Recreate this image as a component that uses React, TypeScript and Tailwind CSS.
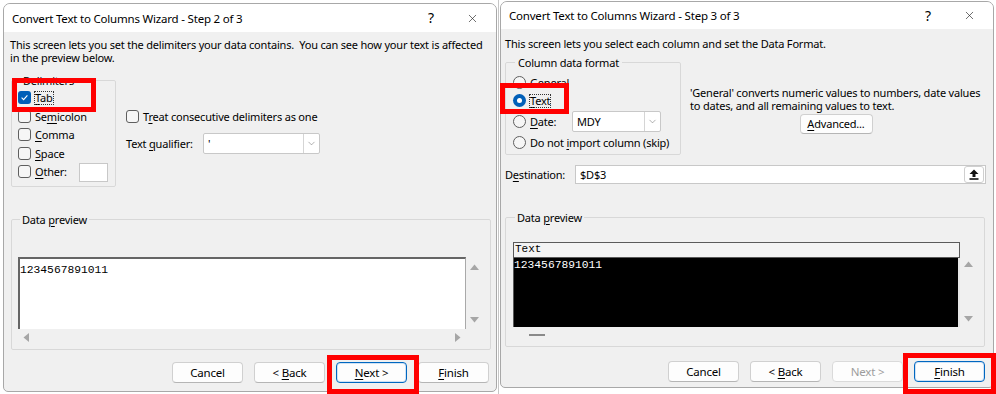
import { ChevronDown, X } from "lucide-react";

type Kids = { children?: React.ReactNode };

function U({ children }: Kids) {
  return <span className="underline underline-offset-[2px] decoration-[1px]">{children}</span>;
}

function Checkbox({ checked = false }: { checked?: boolean }) {
  if (checked) {
    return (
      <span className="w-[13px] h-[13px] rounded-[3px] bg-[#005fb8] flex items-center justify-center shrink-0">
        <svg width="9" height="9" viewBox="0 0 9 9">
          <path d="M1.6 4.7 L3.6 6.6 L7.4 2.4" fill="none" stroke="white" strokeWidth="1.1" />
        </svg>
      </span>
    );
  }
  return <span className="w-[13px] h-[13px] rounded-[3px] border border-[#5f5f5f] bg-[#f6f6f6] shrink-0" />;
}

function Radio({ checked = false }: { checked?: boolean }) {
  if (checked) {
    return (
      <span className="w-[13px] h-[13px] rounded-full bg-[#005fb8] flex items-center justify-center shrink-0">
        <span className="w-[5px] h-[5px] rounded-full bg-white" />
      </span>
    );
  }
  return <span className="w-[13px] h-[13px] rounded-full border border-[#5f5f5f] bg-[#f6f6f6] shrink-0" />;
}

function Btn({ children, primary, disabled }: Kids & { primary?: boolean; disabled?: boolean }) {
  return (
    <div
      className={`w-[71px] h-[21px] rounded-[4px] bg-[#fdfdfd] flex items-center justify-center text-[11.5px] ${
        primary
          ? "border border-[#0067c0] shadow-[inset_0_0_0_1px_#cfe2f5]"
          : disabled
          ? "border border-[#dadada] text-[#9c9c9c]"
          : "border border-[#d0d0d0] border-b-[#b5b5b5]"
      }`}
    >
      <span className="whitespace-pre">{children}</span>
    </div>
  );
}

function Arrow({ dir }: { dir: "up" | "down" | "left" | "right" }) {
  const d = {
    up: "M0 6 L4.5 0.5 L9 6 Z",
    down: "M0 0 L4.5 5.5 L9 0 Z",
    left: "M6 0 L0.5 4.5 L6 9 Z",
    right: "M0 0 L5.5 4.5 L0 9 Z",
  }[dir];
  const vertical = dir === "up" || dir === "down";
  return (
    <svg width={vertical ? 9 : 6} height={vertical ? 6 : 9} viewBox={vertical ? "0 0 9 6" : "0 0 6 9"}>
      <path d={d} fill="#a6a6a6" />
    </svg>
  );
}

function TitleBar({ title, h }: { title: string; h: string }) {
  return (
    <div className={`${h} bg-white flex items-center pl-[8px] shrink-0`}>
      <span className="text-[11.5px] whitespace-nowrap">{title}</span>
      <span className="ml-auto text-[14px] leading-none">?</span>
      <X className="ml-[32px] mr-[17px]" size={13} strokeWidth={1.2} color="#222" />
    </div>
  );
}

function Select({ value, w }: { value: string; w: string }) {
  return (
    <div className={`${w} h-[21px] bg-white border border-[#c8c8c8] rounded-[2px] flex items-stretch`}>
      <span className="flex-1 pl-[4px] flex items-center">{value}</span>
      <span className="w-[16px] border-l border-[#d5d5d5] flex items-center justify-center">
        <ChevronDown size={11} strokeWidth={1} color="#555" />
      </span>
    </div>
  );
}

function LeftDialog() {
  return (
    <div className="mt-[3px] w-[494px] h-[389px] flex flex-col rounded-t-[7px] rounded-b-[5px] border border-[#a8a8a8] overflow-hidden bg-[#f0f0f0]">
      <TitleBar title="Convert Text to Columns Wizard - Step 2 of 3" h="h-[28px]" />
      <div className="flex-1 flex flex-col">
        <p className="mt-[6px] ml-[6px] whitespace-nowrap">
          This screen lets you set the delimiters your data contains.&nbsp; You can see how your text is affected
          <br />
          in the preview below.
        </p>

        <div className="flex mt-[9.5px] ml-[7px] items-start">
          <fieldset className="w-[105px] border border-[#d8d8d8] rounded-[2px] pl-[6px] pt-[2px] pb-[5px]">
            <legend className="ml-[3px] px-[2px]">Delimiters</legend>
            <div className="h-[18.5px] flex items-center gap-[4px]">
              <Checkbox checked />
              <span className="outline outline-1 outline-dotted outline-[#333] leading-[12px]">
                <U>T</U>ab
              </span>
            </div>
            <div className="h-[18.5px] flex items-center gap-[4px]">
              <Checkbox />
              <span>
                Se<U>m</U>icolon
              </span>
            </div>
            <div className="h-[18.5px] flex items-center gap-[4px]">
              <Checkbox />
              <span>
                <U>C</U>omma
              </span>
            </div>
            <div className="h-[18.5px] flex items-center gap-[4px]">
              <Checkbox />
              <span>
                <U>S</U>pace
              </span>
            </div>
            <div className="h-[18.5px] flex items-center gap-[4px]">
              <Checkbox />
              <span className="w-[40px]">
                <U>O</U>ther:
              </span>
              <span className="w-[29px] h-[19px] bg-white border border-[#c8c8c8] mt-[2px]" />
            </div>
          </fieldset>

          <div className="ml-[10px] pt-[33.5px] flex flex-col">
            <div className="h-[18px] flex items-center gap-[4px]">
              <Checkbox />
              <span className="whitespace-nowrap">
                T<U>r</U>eat consecutive delimiters as one
              </span>
            </div>
            <div className="mt-[8px] h-[21px] flex items-center">
              <span className="w-[77px] whitespace-nowrap">
                Text <U>q</U>ualifier:
              </span>
              <Select value="'" w="w-[117px]" />
            </div>
          </div>
        </div>

        <fieldset className="mt-[26px] ml-[7px] w-[480px] border border-[#d8d8d8] rounded-[2px] pl-[6px] pt-[31px] pb-[4px]">
          <legend className="ml-[2px] px-[2px]">
            Data <U>p</U>review
          </legend>
          <div className="flex">
            <div className="w-[448px] h-[72px] bg-white border-t-2 border-l-2 border-[#656565] border-r border-r-[#a9a9a9] pt-[3px]">
              <span className="font-['Liberation_Mono',monospace] text-[11.3px] tracking-normal">1234567891011</span>
            </div>
            <div className="w-[17px] flex flex-col items-center justify-between pt-[7px] pb-[6px]">
              <Arrow dir="up" />
              <Arrow dir="down" />
            </div>
          </div>
          <div className="w-[448px] h-[16px] flex items-center justify-between px-[5px]">
            <Arrow dir="left" />
            <Arrow dir="right" />
          </div>
        </fieldset>

        <div className="mt-[12px] flex justify-end gap-[11px] pr-[7px]">
          <Btn>Cancel</Btn>
          <Btn>
            &lt; <U>B</U>ack
          </Btn>
          <Btn primary>
            <U>N</U>ext &gt;
          </Btn>
          <Btn>
            <U>F</U>inish
          </Btn>
        </div>
      </div>
    </div>
  );
}

function RightDialog() {
  return (
    <div className="mt-[1px] w-[494px] h-[387px] flex flex-col rounded-t-[7px] rounded-b-[5px] border border-[#a8a8a8] overflow-hidden bg-[#f0f0f0]">
      <TitleBar title="Convert Text to Columns Wizard - Step 3 of 3" h="h-[27px]" />
      <div className="flex-1 flex flex-col">
        <p className="mt-[8px] ml-[4px] whitespace-nowrap">
          This screen lets you select each column and set the Data Format.
        </p>

        <div className="flex mt-[6px] ml-[4px] items-start">
          <fieldset className="w-[176px] border border-[#d8d8d8] rounded-[2px] pl-[7px] pt-[4.5px] pb-[2px]">
            <legend className="ml-[2px] px-[3px]">Column data format</legend>
            <div className="h-[18px] flex items-center gap-[4px]">
              <Radio />
              <span>General</span>
            </div>
            <div className="h-[18px] flex items-center gap-[4px]">
              <Radio checked />
              <span className="outline outline-1 outline-dotted outline-[#333] leading-[12px]">
                <U>T</U>ext
              </span>
            </div>
            <div className="mt-[1px] h-[22px] flex items-center gap-[4px]">
              <Radio />
              <span className="w-[38px]">
                <U>D</U>ate:
              </span>
              <Select value="MDY" w="w-[89px]" />
            </div>
            <div className="mt-[1px] h-[18px] flex items-center gap-[4px]">
              <Radio />
              <span className="whitespace-nowrap">
                Do not <U>i</U>mport column (skip)
              </span>
            </div>
          </fieldset>

          <div className="ml-[9px] mt-[30px] w-[292px] flex flex-col items-center">
            <p className="self-start whitespace-nowrap">
              'General' converts numeric values to numbers, date values
              <br />
              to dates, and all remaining values to text.
            </p>
            <div className="mt-[1.5px] w-[73px] h-[20px] rounded-[4px] bg-[#fdfdfd] border border-[#d0d0d0] border-b-[#b5b5b5] flex items-center justify-center">
              <span>
                <U>A</U>dvanced...
              </span>
            </div>
          </div>
        </div>

        <div className="mt-[10px] ml-[4px] flex items-center">
          <span className="w-[70px]">
            D<U>e</U>stination:
          </span>
          <div className="w-[411px] h-[19px] bg-white border border-[#c8c8c8] flex items-center pl-[4px] pr-[1px]">
            <span className="flex-1">$D$3</span>
            <span className="w-[20px] h-[17px] rounded-[3px] border border-[#cfcfcf] bg-white flex items-center justify-center">
              <svg width="10" height="11" viewBox="0 0 10 11">
                <path d="M5 0.5 L9.5 5 H6.5 V8 H3.5 V5 H0.5 Z" fill="#111" />
                <rect x="0.5" y="9.2" width="9" height="1.6" fill="#111" />
              </svg>
            </span>
          </div>
        </div>

        <fieldset className="mt-[27px] ml-[4px] w-[480px] border border-[#d8d8d8] rounded-[2px] pl-[7px] pt-[18px] pb-[3px]">
          <legend className="ml-[2px] px-[2px]">
            Data <U>p</U>review
          </legend>
          <div className="flex">
            <div className="w-[447px] h-[85px] flex flex-col border-t border-l border-[#5a5a5a]">
              <div className="h-[15px] bg-[#f3f3f3] border-r border-b border-[#5a5a5a] font-['Liberation_Mono',monospace] tracking-normal pl-[1px]">
                Text
              </div>
              <div className="flex-1 bg-black border-r-2 border-[#e6e6e6] text-white font-['Liberation_Mono',monospace] text-[11.3px] tracking-normal pt-[1px]">
                1234567891011
              </div>
            </div>
            <div className="w-[17px] flex flex-col items-center justify-between pt-[19px] pb-[5px]">
              <Arrow dir="up" />
              <Arrow dir="down" />
            </div>
          </div>
          <div className="h-[16px] flex items-center pl-[16px]">
            <span className="w-[16px] h-[2px] bg-[#8a8a8a]" />
          </div>
        </fieldset>

        <div className="mt-[14px] flex justify-end gap-[11px] pr-[8px]">
          <Btn>Cancel</Btn>
          <Btn>
            &lt; <U>B</U>ack
          </Btn>
          <Btn disabled>Next &gt;</Btn>
          <Btn primary>
            <U>F</U>inish
          </Btn>
        </div>
      </div>
    </div>
  );
}

export default function App() {
  return (
    <div className="relative w-[996px] h-[394px] bg-white overflow-hidden flex font-['Noto_Sans',sans-serif] text-[11px] tracking-[-0.2px] text-black leading-[13px]">
      <div className="ml-[3px]">
        <LeftDialog />
      </div>
      <div className="ml-[1px] w-px bg-[#c6c6c6]" />
      <div className="ml-[1px]">
        <RightDialog />
      </div>

      {/* highlight boxes */}
      <div className="absolute left-[12px] top-[78px] w-[84px] h-[34px] border-[5px] border-[#ff0000]" />
      <div className="absolute left-[327px] top-[355px] w-[92px] h-[39px] border-[5px] border-[#ff0000]" />
      <div className="absolute left-[500px] top-[83px] w-[69px] h-[31px] border-[5px] border-[#ff0000]" />
      <div className="absolute left-[903px] top-[353px] w-[93px] h-[41px] border-[5px] border-[#ff0000]" />
    </div>
  );
}
